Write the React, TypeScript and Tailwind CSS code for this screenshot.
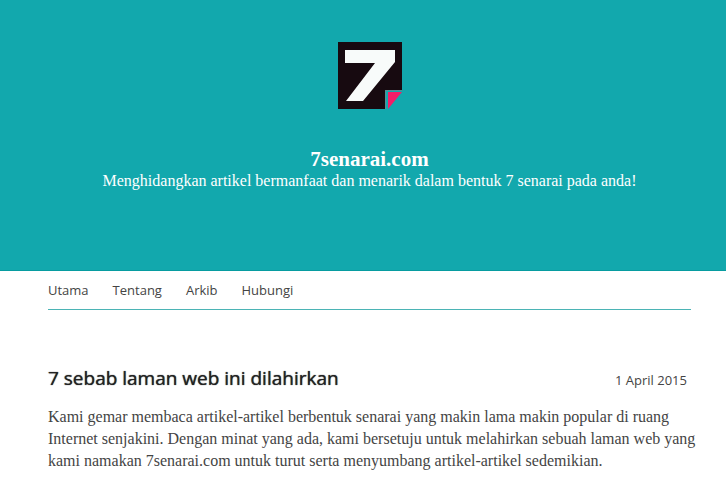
const links = ["Utama", "Tentang", "Arkib", "Hubungi"];

function Logo() {
  return (
    <svg viewBox="0 0 64 67" className="h-[67px] w-16" role="img" aria-label="7senarai">
      <path d="M0 0H64V48H47V67H0Z" fill="#170a10" />
      <path d="M7 8H57V20L25 59H8L37 21H7Z" fill="#f8fbfa" />
      <path d="M47 48H64V49H48V67H47Z" fill="#5b8b92" />
      <path d="M50 50H64L50 67Z" fill="#f31d68" />
    </svg>
  );
}

export default function App() {
  return (
    <div className="bg-white font-['Open_Sans',sans-serif] text-[#444]">
      <header className="flex flex-col items-center border-b border-[#079ca0] bg-[#12a8ad] pt-[42px] pr-[35px] pb-20 pl-12 text-center font-['Liberation_Serif',serif] text-white">
        <Logo />
        <h1 className="mt-[38px] text-[21px] leading-6 font-bold">7senarai.com</h1>
        <p className="text-base leading-[19px]">
          Menghidangkan artikel bermanfaat dan menarik dalam bentuk 7 senarai pada anda!
        </p>
      </header>
      <div className="pr-[35px] pl-12">
        <nav className="flex gap-6 border-b border-[#4bb4b5] pt-2 pb-2 text-[13px] leading-[22px]">
          {links.map((name) => (
            <a key={name} href="#">
              {name}
            </a>
          ))}
        </nav>
        <article className="pt-[54px]">
          <div className="flex items-baseline justify-between pr-1">
            <h2 className="text-[19px] leading-7 text-[#222] [text-shadow:0_0_1px_#222]">
              7 sebab laman web ini dilahirkan
            </h2>
            <time dateTime="2015-04-01" className="text-[13px]">
              1 April 2015
            </time>
          </div>
          <p className="mt-[14px] -mr-2 font-['Liberation_Serif',serif] text-base leading-[22px]">
            Kami gemar membaca artikel-artikel berbentuk senarai yang makin lama makin popular di ruang
            Internet senjakini. Dengan minat yang ada, kami bersetuju untuk melahirkan sebuah laman web yang
            kami namakan 7senarai.com untuk turut serta menyumbang artikel-artikel sedemikian.
          </p>
        </article>
      </div>
    </div>
  );
}
